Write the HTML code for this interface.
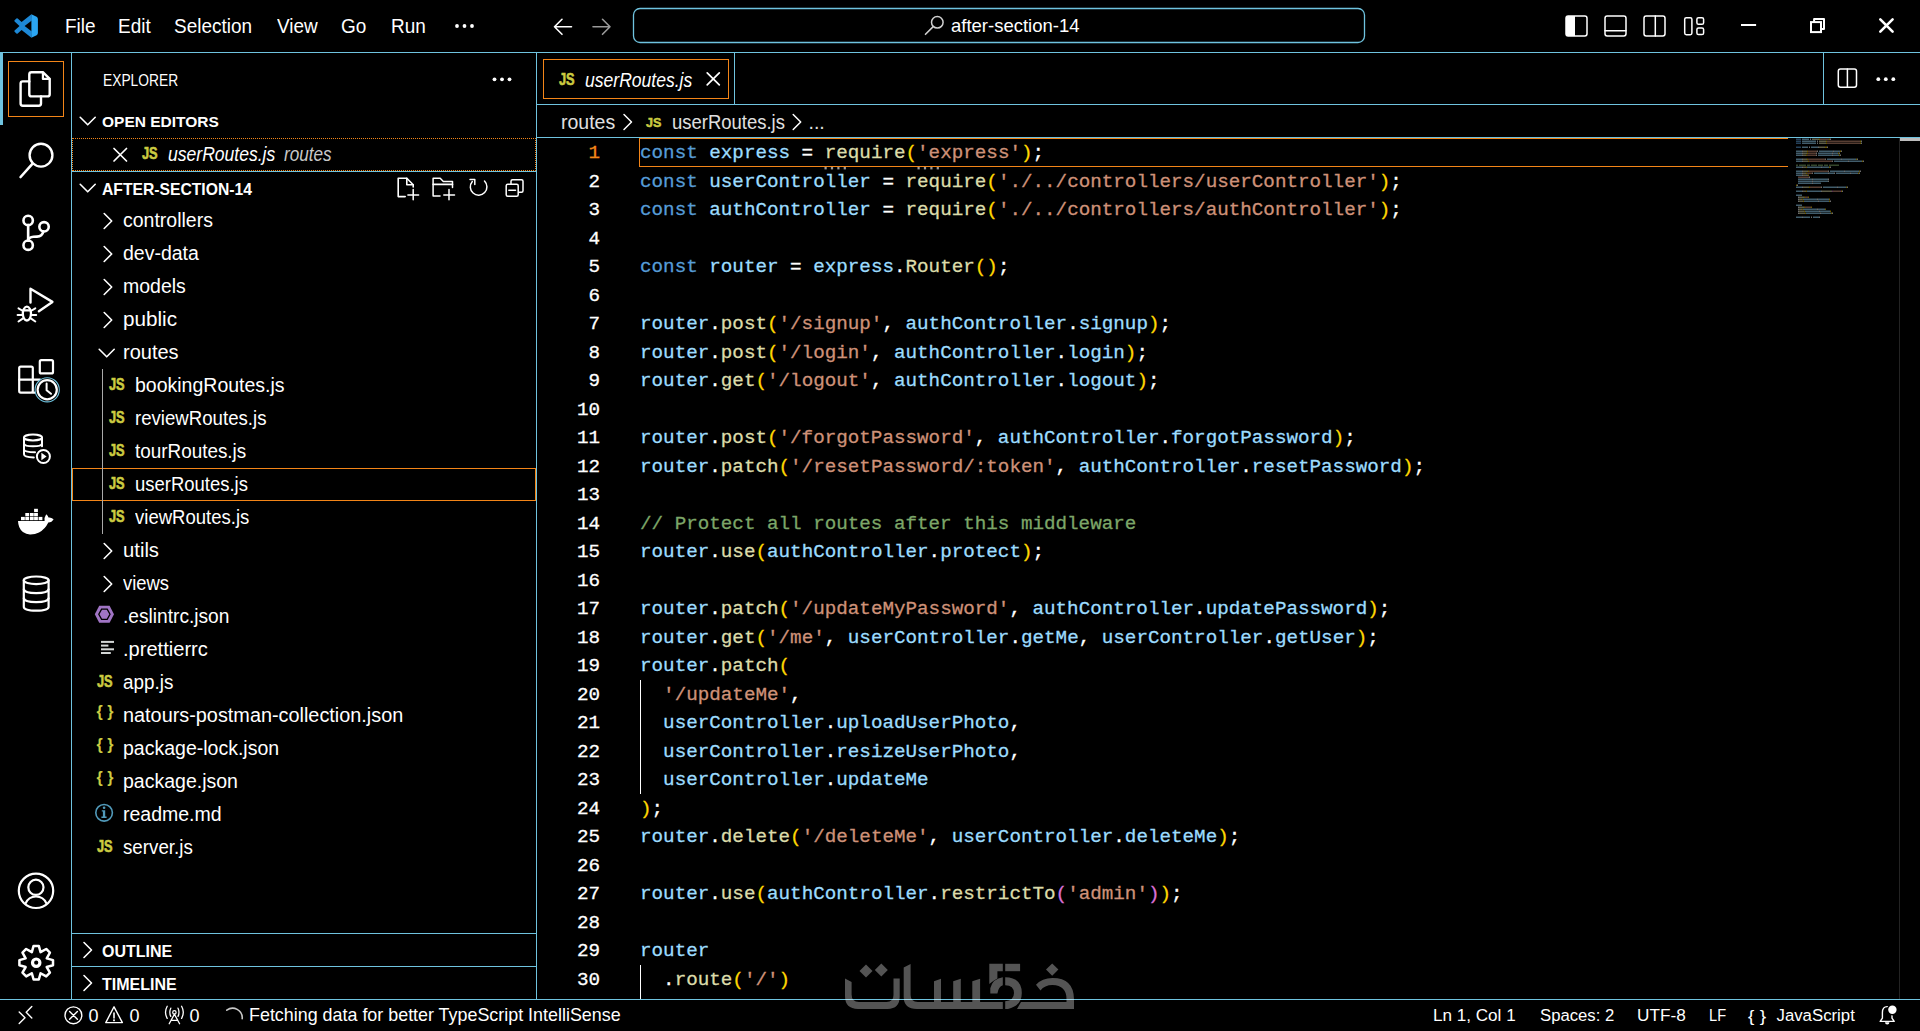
<!DOCTYPE html><html><head><meta charset="utf-8"><title>VS Code</title><style>
*{margin:0;padding:0;box-sizing:border-box}
html,body{width:1920px;height:1031px;background:#000;overflow:hidden}
body{position:relative;font-family:"Liberation Sans",sans-serif;color:#fff}
.a{position:absolute}
.t{position:absolute;white-space:pre}
.code{position:absolute;font-family:"Liberation Mono",monospace;white-space:pre;-webkit-text-stroke-width:0.3px}
svg{position:absolute;left:0;top:0}
</style></head><body>
<div class="a" style="left:0px;top:52px;width:1920px;height:1px;background:#6FC3DF;"></div>
<div class="a" style="left:71px;top:53px;width:1px;height:946px;background:#6FC3DF;"></div>
<div class="a" style="left:536px;top:53px;width:1px;height:946px;background:#6FC3DF;"></div>
<div class="a" style="left:0px;top:999px;width:1920px;height:1px;background:#6FC3DF;"></div>
<div class="a" style="left:537px;top:104px;width:1383px;height:1px;background:#6FC3DF;"></div>
<div class="a" style="left:734px;top:53px;width:1px;height:51px;background:#6FC3DF;"></div>
<div class="a" style="left:1823px;top:53px;width:1px;height:51px;background:#6FC3DF;"></div>
<div class="a" style="left:537px;top:137px;width:1383px;height:1px;background:#6FC3DF;"></div>
<div class="a" style="left:72px;top:171px;width:464px;height:1px;background:#6FC3DF;"></div>
<div class="a" style="left:72px;top:933px;width:464px;height:1px;background:#6FC3DF;"></div>
<div class="a" style="left:72px;top:966px;width:464px;height:1px;background:#6FC3DF;"></div>
<div class="a" style="left:0px;top:53px;width:3px;height:72px;background:#6FC3DF;"></div>
<div class="a" style="left:8px;top:61px;width:56px;height:56px;border:1px solid #F38518"></div>
<div class="t" style="left:64.50px;top:15.61px;font-size:20.3px;line-height:20.3px;color:#fff;font-weight:normal;font-style:normal;transform:scaleX(0.935);transform-origin:0 0;">File</div>
<div class="t" style="left:117.80px;top:15.61px;font-size:20.3px;line-height:20.3px;color:#fff;font-weight:normal;font-style:normal;transform:scaleX(0.935);transform-origin:0 0;">Edit</div>
<div class="t" style="left:174.00px;top:15.61px;font-size:20.3px;line-height:20.3px;color:#fff;font-weight:normal;font-style:normal;transform:scaleX(0.935);transform-origin:0 0;">Selection</div>
<div class="t" style="left:277.00px;top:15.61px;font-size:20.3px;line-height:20.3px;color:#fff;font-weight:normal;font-style:normal;transform:scaleX(0.935);transform-origin:0 0;">View</div>
<div class="t" style="left:341.00px;top:15.61px;font-size:20.3px;line-height:20.3px;color:#fff;font-weight:normal;font-style:normal;transform:scaleX(0.935);transform-origin:0 0;">Go</div>
<div class="t" style="left:390.80px;top:15.61px;font-size:20.3px;line-height:20.3px;color:#fff;font-weight:normal;font-style:normal;transform:scaleX(0.935);transform-origin:0 0;">Run</div>
<div class="t" style="left:951.00px;top:17.14px;font-size:18.5px;line-height:18.5px;color:#fff;font-weight:normal;font-style:normal;">after-section-14</div>
<div class="t" style="left:102.50px;top:72.99px;font-size:15.6px;line-height:15.6px;color:#fff;font-weight:normal;font-style:normal;transform:scaleX(0.885);transform-origin:0 0;">EXPLORER</div>
<div class="t" style="left:102.00px;top:114.48px;font-size:15.5px;line-height:15.5px;color:#fff;font-weight:bold;font-style:normal;">OPEN EDITORS</div>
<div class="a" style="left:72px;top:138px;width:464px;height:33px;border:1px dotted #F38518"></div>
<div class="t" style="left:168.00px;top:144.79px;font-size:19.5px;line-height:19.5px;color:#fff;font-weight:normal;font-style:italic;transform:scaleX(0.9);transform-origin:0 0;">userRoutes.js</div>
<div class="t" style="left:283.50px;top:144.79px;font-size:19.5px;line-height:19.5px;color:#c8c8c8;font-weight:normal;font-style:italic;transform:scaleX(0.88);transform-origin:0 0;">routes</div>
<div class="t" style="left:102.00px;top:182.11px;font-size:15.7px;line-height:15.7px;color:#fff;font-weight:bold;font-style:normal;">AFTER-SECTION-14</div>
<div class="t" style="left:123.00px;top:210.89px;font-size:19.5px;line-height:19.5px;color:#fff;font-weight:normal;font-style:normal;">controllers</div>
<div class="t" style="left:123.00px;top:243.89px;font-size:19.5px;line-height:19.5px;color:#fff;font-weight:normal;font-style:normal;">dev-data</div>
<div class="t" style="left:123.00px;top:276.89px;font-size:19.5px;line-height:19.5px;color:#fff;font-weight:normal;font-style:normal;">models</div>
<div class="t" style="left:123.00px;top:309.89px;font-size:19.5px;line-height:19.5px;color:#fff;font-weight:normal;font-style:normal;transform:scaleX(1.06);transform-origin:0 0;">public</div>
<div class="t" style="left:123.00px;top:342.89px;font-size:19.5px;line-height:19.5px;color:#fff;font-weight:normal;font-style:normal;transform:scaleX(1.025);transform-origin:0 0;">routes</div>
<div class="t" style="left:135.00px;top:375.89px;font-size:19.5px;line-height:19.5px;color:#fff;font-weight:normal;font-style:normal;">bookingRoutes.js</div>
<div class="t" style="left:135.00px;top:408.89px;font-size:19.5px;line-height:19.5px;color:#fff;font-weight:normal;font-style:normal;transform:scaleX(0.955);transform-origin:0 0;">reviewRoutes.js</div>
<div class="t" style="left:135.00px;top:441.89px;font-size:19.5px;line-height:19.5px;color:#fff;font-weight:normal;font-style:normal;transform:scaleX(0.968);transform-origin:0 0;">tourRoutes.js</div>
<div class="t" style="left:135.00px;top:474.89px;font-size:19.5px;line-height:19.5px;color:#fff;font-weight:normal;font-style:normal;transform:scaleX(0.947);transform-origin:0 0;">userRoutes.js</div>
<div class="t" style="left:135.00px;top:507.89px;font-size:19.5px;line-height:19.5px;color:#fff;font-weight:normal;font-style:normal;transform:scaleX(0.95);transform-origin:0 0;">viewRoutes.js</div>
<div class="t" style="left:123.00px;top:540.89px;font-size:19.5px;line-height:19.5px;color:#fff;font-weight:normal;font-style:normal;transform:scaleX(1.038);transform-origin:0 0;">utils</div>
<div class="t" style="left:123.00px;top:573.89px;font-size:19.5px;line-height:19.5px;color:#fff;font-weight:normal;font-style:normal;transform:scaleX(0.943);transform-origin:0 0;">views</div>
<div class="t" style="left:123.00px;top:606.89px;font-size:19.5px;line-height:19.5px;color:#fff;font-weight:normal;font-style:normal;transform:scaleX(0.982);transform-origin:0 0;">.eslintrc.json</div>
<div class="t" style="left:123.00px;top:639.89px;font-size:19.5px;line-height:19.5px;color:#fff;font-weight:normal;font-style:normal;transform:scaleX(1.03);transform-origin:0 0;">.prettierrc</div>
<div class="t" style="left:123.00px;top:672.89px;font-size:19.5px;line-height:19.5px;color:#fff;font-weight:normal;font-style:normal;transform:scaleX(0.967);transform-origin:0 0;">app.js</div>
<div class="t" style="left:123.00px;top:705.89px;font-size:19.5px;line-height:19.5px;color:#fff;font-weight:normal;font-style:normal;transform:scaleX(1.018);transform-origin:0 0;">natours-postman-collection.json</div>
<div class="t" style="left:123.00px;top:738.89px;font-size:19.5px;line-height:19.5px;color:#fff;font-weight:normal;font-style:normal;">package-lock.json</div>
<div class="t" style="left:123.00px;top:771.89px;font-size:19.5px;line-height:19.5px;color:#fff;font-weight:normal;font-style:normal;">package.json</div>
<div class="t" style="left:123.00px;top:804.89px;font-size:19.5px;line-height:19.5px;color:#fff;font-weight:normal;font-style:normal;">readme.md</div>
<div class="t" style="left:123.00px;top:837.89px;font-size:19.5px;line-height:19.5px;color:#fff;font-weight:normal;font-style:normal;transform:scaleX(0.961);transform-origin:0 0;">server.js</div>
<div class="a" style="left:72px;top:468px;width:464px;height:33px;border:1px solid #F38518"></div>
<div class="a" style="left:102px;top:369px;width:1px;height:165px;background:#a9a9a9;"></div>
<div class="t" style="left:102.00px;top:944.45px;font-size:16px;line-height:16px;color:#fff;font-weight:bold;font-style:normal;">OUTLINE</div>
<div class="t" style="left:102.00px;top:977.45px;font-size:16px;line-height:16px;color:#fff;font-weight:bold;font-style:normal;">TIMELINE</div>
<div class="a" style="left:543px;top:59px;width:186px;height:40px;border:1px solid #F38518"></div>
<div class="t" style="left:585.00px;top:71.49px;font-size:19.5px;line-height:19.5px;color:#fff;font-weight:normal;font-style:italic;transform:scaleX(0.9);transform-origin:0 0;">userRoutes.js</div>
<div class="t" style="left:561.00px;top:113.49px;font-size:19.5px;line-height:19.5px;color:#e0e0e0;font-weight:normal;font-style:normal;">routes</div>
<div class="t" style="left:672.00px;top:113.49px;font-size:19.5px;line-height:19.5px;color:#e0e0e0;font-weight:normal;font-style:normal;transform:scaleX(0.947);transform-origin:0 0;">userRoutes.js</div>
<div class="t" style="left:808.50px;top:113.49px;font-size:19.5px;line-height:19.5px;color:#e0e0e0;font-weight:normal;font-style:normal;">...</div>
<div class="t" style="left:88.50px;top:1006.56px;font-size:18px;line-height:18px;color:#fff;font-weight:normal;font-style:normal;">0</div>
<div class="t" style="left:129.50px;top:1006.56px;font-size:18px;line-height:18px;color:#fff;font-weight:normal;font-style:normal;">0</div>
<div class="t" style="left:189.50px;top:1006.56px;font-size:18px;line-height:18px;color:#fff;font-weight:normal;font-style:normal;">0</div>
<div class="t" style="left:249.00px;top:1006.64px;font-size:17.9px;line-height:17.9px;color:#fff;font-weight:normal;font-style:normal;">Fetching data for better TypeScript IntelliSense</div>
<div class="t" style="left:1433.00px;top:1007.32px;font-size:17.1px;line-height:17.1px;color:#fff;font-weight:normal;font-style:normal;">Ln 1, Col 1</div>
<div class="t" style="left:1540.00px;top:1007.66px;font-size:16.7px;line-height:16.7px;color:#fff;font-weight:normal;font-style:normal;">Spaces: 2</div>
<div class="t" style="left:1637.00px;top:1007.24px;font-size:17.2px;line-height:17.2px;color:#fff;font-weight:normal;font-style:normal;">UTF-8</div>
<div class="t" style="left:1708.50px;top:1007.24px;font-size:17.2px;line-height:17.2px;color:#fff;font-weight:normal;font-style:normal;transform:scaleX(0.85);transform-origin:0 0;">LF</div>
<div class="t" style="left:1776.50px;top:1007.58px;font-size:16.8px;line-height:16.8px;color:#fff;font-weight:normal;font-style:normal;">JavaScript</div>
<svg width="1920" height="1031" viewBox="0 0 1920 1031" style="position:absolute;left:0;top:0"><path fill="#1D88D6" d="M14.6 20.3Q14 20.9 14.6 21.5L19.5 26L14.6 30.5Q14 31.1 14.6 31.7L16.4 33.4Q17 33.9 17.7 33.4L21.6 30L31.4 37.7L31.8 31.6L24.6 26L31.8 20.4L31.4 14.3L21.6 22L17.7 18.6Q17 18.1 16.4 18.6Z"/>
<path fill="#2BA6F3" d="M31.4 14.3L36.6 16.8Q37.9 17.5 37.9 19V33Q37.9 34.5 36.6 35.2L31.4 37.7Z"/>
<circle cx="457" cy="26" r="1.9" fill="#fff"/>
<circle cx="464.5" cy="26" r="1.9" fill="#fff"/>
<circle cx="472" cy="26" r="1.9" fill="#fff"/>
<path d="M571.5 26.8H554.5M562 19.3L554.5 26.8L562 34.3" fill="none" stroke="#fff" stroke-width="1.6" stroke-linecap="round" stroke-linejoin="round" />
<path d="M593 26.8H610M602.5 19.3L610 26.8L602.5 34.3" fill="none" stroke="#9a9a9a" stroke-width="1.6" stroke-linecap="round" stroke-linejoin="round" />
<rect x="633.5" y="8.5" width="731" height="34" rx="6.5" fill="none" stroke="#6FC3DF" stroke-width="1.3"/>
<circle cx="937.3" cy="22.3" r="5.8" fill="none" stroke="#d0d0d0" stroke-width="1.5"/>
<path d="M933.2 26.6L925.5 34.3" fill="none" stroke="#d0d0d0" stroke-width="1.6" stroke-linecap="round" stroke-linejoin="round" />
<rect x="1566" y="16" width="21" height="20" rx="2.2" fill="none" stroke="#fff" stroke-width="1.5"/>
<path d="M1568.2 16 h6.8 v20 h-6.8 q-2.2 0 -2.2 -2.2 v-15.6 q0 -2.2 2.2 -2.2z" fill="#fff"/>
<rect x="1605" y="16" width="21" height="20" rx="2.2" fill="none" stroke="#fff" stroke-width="1.5"/>
<path d="M1605 30.7H1626" fill="none" stroke="#fff" stroke-width="1.5" stroke-linecap="round" stroke-linejoin="round" stroke-linecap="butt"/>
<rect x="1644" y="16" width="21" height="20" rx="2.2" fill="none" stroke="#fff" stroke-width="1.5"/>
<path d="M1655.3 16V36" fill="none" stroke="#fff" stroke-width="1.5" stroke-linecap="round" stroke-linejoin="round" />
<rect x="1684.7" y="17.7" width="7.2" height="17" rx="1.6" fill="none" stroke="#fff" stroke-width="1.5"/>
<rect x="1696.9" y="17.7" width="6.7" height="6.6" rx="1.6" fill="none" stroke="#fff" stroke-width="1.5"/>
<rect x="1696.9" y="28" width="6.7" height="6.6" rx="1.6" fill="none" stroke="#fff" stroke-width="1.5"/>
<rect x="1741" y="24" width="15.1" height="2" fill="#fff"/>
<rect x="1811" y="22.1" width="10" height="10" fill="none" stroke="#fff" stroke-width="2"/>
<path d="M1814.1 22.1V19H1824V29H1821" fill="none" stroke="#fff" stroke-width="2.0" stroke-linecap="round" stroke-linejoin="round" stroke-linecap="butt" stroke-linejoin="miter"/>
<path d="M1880.3 19.4L1892.6 31.7M1892.6 19.4L1880.3 31.7" fill="none" stroke="#fff" stroke-width="2.6" stroke-linecap="round" stroke-linejoin="round" stroke-linecap="square"/>
<path d="M31.5 72.3H43.1L49.7 78.9V94.2Q49.7 96.4 47.5 96.4H31.5Q29.3 96.4 29.3 94.2V74.5Q29.3 72.3 31.5 72.3Z" fill="none" stroke="#fff" stroke-width="2.4" stroke-linecap="round" stroke-linejoin="round" />
<path d="M42.9 72.5V78.9H49.5" fill="none" stroke="#fff" stroke-width="2.2" stroke-linecap="round" stroke-linejoin="round" stroke-linejoin="miter"/>
<path d="M29.3 81.4H22.8Q20.6 81.4 20.6 83.6V103.5Q20.6 105.7 22.8 105.7H38.8Q41 105.7 41 103.5V96.4" fill="none" stroke="#fff" stroke-width="2.4" stroke-linecap="round" stroke-linejoin="round" />
<circle cx="41" cy="155.2" r="11.4" fill="none" stroke="#fff" stroke-width="2.4"/>
<path d="M32.6 163.6L20.6 177" fill="none" stroke="#fff" stroke-width="2.6" stroke-linecap="round" stroke-linejoin="round" />
<circle cx="28.15" cy="220.4" r="4.7" fill="none" stroke="#fff" stroke-width="2.6"/>
<circle cx="28.15" cy="245.2" r="4.7" fill="none" stroke="#fff" stroke-width="2.6"/>
<circle cx="44.05" cy="226.8" r="4.7" fill="none" stroke="#fff" stroke-width="2.6"/>
<path d="M28.15 225.1V240.5" fill="none" stroke="#fff" stroke-width="2.6" stroke-linecap="round" stroke-linejoin="round" />
<path d="M43.3 231.4Q42.3 236.4 37 236.6L33.5 236.8Q29 237.2 28.15 240.3" fill="none" stroke="#fff" stroke-width="2.6" stroke-linecap="round" stroke-linejoin="round" />
<path d="M30.5 302.6V288.8L52.4 301.9L38.9 311.2" fill="none" stroke="#fff" stroke-width="2.4" stroke-linecap="round" stroke-linejoin="round" />
<ellipse cx="26.9" cy="313.6" rx="4.1" ry="6.9" fill="none" stroke="#fff" stroke-width="2.3"/>
<path d="M23.2 310.4H30.6" fill="none" stroke="#fff" stroke-width="2.1" stroke-linecap="round" stroke-linejoin="round" stroke-linecap="butt"/>
<path d="M18.5 308.3L23 311M35.3 308.3L30.8 311M17.6 314.9H22.8M36.2 314.9H31M18.5 321.5L23 318.4M35.3 321.5L30.8 318.4" fill="none" stroke="#fff" stroke-width="2.0" stroke-linecap="round" stroke-linejoin="round" />
<rect x="19.2" y="366.6" width="13.6" height="26" rx="1.5" fill="none" stroke="#fff" stroke-width="2.2"/>
<path d="M19.2 379.6H40" fill="none" stroke="#fff" stroke-width="2.2" stroke-linecap="round" stroke-linejoin="round" />
<path d="M32.8 392.6H40" fill="none" stroke="#fff" stroke-width="2.2" stroke-linecap="round" stroke-linejoin="round" />
<rect x="39.8" y="360.2" width="13.2" height="13.2" rx="1.5" fill="none" stroke="#fff" stroke-width="2.2"/>
<circle cx="47.2" cy="389.8" r="12.1" fill="#000" stroke="#6FC3DF" stroke-width="1.1"/>
<circle cx="47.2" cy="389.8" r="9.6" fill="#000" stroke="#fff" stroke-width="2.2"/>
<path d="M46.6 383.6V390.3L51 393.8" fill="none" stroke="#fff" stroke-width="2.0" stroke-linecap="round" stroke-linejoin="round" />
<ellipse cx="33" cy="437.5" rx="9" ry="2.9" fill="none" stroke="#fff" stroke-width="2.0"/>
<path d="M24 437.5V454.2Q24 457.2 33.8 457.4M42 437.5V446.3" fill="none" stroke="#fff" stroke-width="2.0" stroke-linecap="round" stroke-linejoin="round" stroke-linecap="butt"/>
<path d="M24 443.6Q24.5 446.3 33 446.3Q41.5 446.3 42 443.6" fill="none" stroke="#fff" stroke-width="2.0" stroke-linecap="round" stroke-linejoin="round" />
<path d="M24 449.6Q24.5 452.2 35 452.2" fill="none" stroke="#fff" stroke-width="2.0" stroke-linecap="round" stroke-linejoin="round" stroke-linecap="butt"/>
<circle cx="43.4" cy="456.5" r="6.5" fill="#000" stroke="#fff" stroke-width="2.0"/>
<path d="M41.4 452.8V460.2L46.6 456.5Z" fill="#fff" />
<path d="M18 521H44.6Q44 517.5 46.2 514.2Q48 515.5 48.5 517.6Q51 517.2 53.6 519.2Q52 522.3 48.3 522.6Q45 529.5 39 532.5Q35 534.6 30 534.5Q22 534 19.2 527Q18.2 524.5 18 521Z" fill="#fff" />
<rect x="34.1" y="508.8" width="3.8" height="3.3" fill="#fff"/>
<rect x="25.3" y="513.0" width="3.8" height="3.3" fill="#fff"/>
<rect x="29.9" y="513.0" width="3.8" height="3.3" fill="#fff"/>
<rect x="34.1" y="513.0" width="3.8" height="3.3" fill="#fff"/>
<rect x="21.0" y="516.9" width="3.8" height="3.3" fill="#fff"/>
<rect x="25.3" y="516.9" width="3.8" height="3.3" fill="#fff"/>
<rect x="29.9" y="516.9" width="3.8" height="3.3" fill="#fff"/>
<rect x="34.1" y="516.9" width="3.8" height="3.3" fill="#fff"/>
<rect x="38.6" y="516.9" width="3.8" height="3.3" fill="#fff"/>
<ellipse cx="36.2" cy="580.3" rx="12.4" ry="3.8" fill="none" stroke="#fff" stroke-width="2.2"/>
<path d="M23.8 580.3V606.7Q23.8 610.6 36.2 610.6Q48.6 610.6 48.6 606.7V580.3" fill="none" stroke="#fff" stroke-width="2.2" stroke-linecap="round" stroke-linejoin="round" />
<path d="M23.8 589.3Q24.5 593.1 36.2 593.1Q47.9 593.1 48.6 589.3" fill="none" stroke="#fff" stroke-width="2.2" stroke-linecap="round" stroke-linejoin="round" />
<path d="M23.8 598.3Q24.5 602.1 36.2 602.1Q47.9 602.1 48.6 598.3" fill="none" stroke="#fff" stroke-width="2.2" stroke-linecap="round" stroke-linejoin="round" />
<circle cx="36" cy="890.8" r="17.2" fill="none" stroke="#fff" stroke-width="2.2"/>
<circle cx="35.9" cy="887.3" r="7.6" fill="none" stroke="#fff" stroke-width="2.2"/>
<path d="M25.6 903.4Q28.5 896.5 36 896.5Q43.5 896.5 46.4 903.4" fill="none" stroke="#fff" stroke-width="2.2" stroke-linecap="round" stroke-linejoin="round" />
<path d="M31.84 952.17 L33.58 945.90 L38.82 945.90 L40.56 952.17 L46.22 948.97 L49.93 952.68 L46.73 958.34 L53.00 960.08 L53.00 965.32 L46.73 967.06 L49.93 972.72 L46.22 976.43 L40.56 973.23 L38.82 979.50 L33.58 979.50 L31.84 973.23 L26.18 976.43 L22.47 972.72 L25.67 967.06 L19.40 965.32 L19.40 960.08 L25.67 958.34 L22.47 952.68 L26.18 948.97Z" fill="none" stroke="#fff" stroke-width="2.5" stroke-linecap="round" stroke-linejoin="round" stroke-linejoin="miter"/>
<circle cx="36.2" cy="962.7" r="3.7" fill="none" stroke="#fff" stroke-width="3.2"/>
<circle cx="494.5" cy="79.3" r="1.9" fill="#fff"/>
<circle cx="502" cy="79.3" r="1.9" fill="#fff"/>
<circle cx="509.5" cy="79.3" r="1.9" fill="#fff"/>
<path d="M80.2 117.3L87.7 124.8L95.2 117.3" fill="none" stroke="#fff" stroke-width="1.6" stroke-linecap="round" stroke-linejoin="round" stroke-linecap="butt"/>
<path d="M80.2 184.3L87.7 191.8L95.2 184.3" fill="none" stroke="#fff" stroke-width="1.6" stroke-linecap="round" stroke-linejoin="round" stroke-linecap="butt"/>
<path d="M84 942.5L91.5 950.0L84 957.5" fill="none" stroke="#fff" stroke-width="1.6" stroke-linecap="round" stroke-linejoin="round" stroke-linecap="butt"/>
<path d="M84 975.5L91.5 983.0L84 990.5" fill="none" stroke="#fff" stroke-width="1.6" stroke-linecap="round" stroke-linejoin="round" stroke-linecap="butt"/>
<path d="M114 148.5L126.5 161M126.5 148.5L114 161" fill="none" stroke="#fff" stroke-width="1.7" stroke-linecap="round" stroke-linejoin="round" stroke-linecap="butt"/>
<path d="M405.2 196.6H398.2V178.3H406.8L413.2 184.7V187" fill="none" stroke="#fff" stroke-width="1.6" stroke-linecap="round" stroke-linejoin="round" stroke-linecap="butt" stroke-linejoin="miter"/>
<path d="M406.8 178.3V184.7H413.2" fill="none" stroke="#fff" stroke-width="1.6" stroke-linecap="round" stroke-linejoin="round" stroke-linecap="butt" stroke-linejoin="miter"/>
<path d="M413.2 189.5V199.8M407.9 195H418.6" fill="none" stroke="#fff" stroke-width="1.5" stroke-linecap="round" stroke-linejoin="round" stroke-linecap="butt"/>
<path d="M440 196.1H433.1V178.3H440.2L443.3 181.5H452.5V187.5" fill="none" stroke="#fff" stroke-width="1.5" stroke-linecap="round" stroke-linejoin="round" stroke-linecap="butt" stroke-linejoin="miter"/>
<path d="M433.1 184.4H452.5" fill="none" stroke="#fff" stroke-width="1.6" stroke-linecap="round" stroke-linejoin="round" stroke-linecap="butt" stroke-linejoin="miter"/>
<path d="M449 189.5V199.8M443.8 195H454.5" fill="none" stroke="#fff" stroke-width="1.5" stroke-linecap="round" stroke-linejoin="round" stroke-linecap="butt"/>
<path d="M484.5 181A8.3 8.3 0 1 1 472.3 181.5" fill="none" stroke="#fff" stroke-width="1.5" stroke-linecap="round" stroke-linejoin="round" stroke-linecap="butt"/>
<path d="M470 179.6H474.8V184.6" fill="none" stroke="#fff" stroke-width="1.5" stroke-linecap="round" stroke-linejoin="round" stroke-linecap="butt" stroke-linejoin="miter"/>
<rect x="511" y="179.8" width="12" height="12.4" rx="1.5" fill="none" stroke="#fff" stroke-width="1.5"/>
<rect x="506.2" y="184.3" width="12" height="12" rx="1.5" fill="#000" stroke="#fff" stroke-width="1.5"/>
<path d="M508.8 190.2H515.5" fill="none" stroke="#fff" stroke-width="1.5" stroke-linecap="round" stroke-linejoin="round" stroke-linecap="butt"/>
<path d="M707.2 72.8L719.3 84.9M719.3 72.8L707.2 84.9" fill="none" stroke="#fff" stroke-width="1.7" stroke-linecap="round" stroke-linejoin="round" stroke-linecap="butt"/>
<path d="M624 114.5L631.5 122L624 129.5" fill="none" stroke="#fff" stroke-width="1.5" stroke-linecap="round" stroke-linejoin="round" stroke-linecap="butt"/>
<path d="M793.2 114.5L800.7 122L793.2 129.5" fill="none" stroke="#fff" stroke-width="1.5" stroke-linecap="round" stroke-linejoin="round" stroke-linecap="butt"/>
<rect x="1838.3" y="69" width="18.2" height="18.2" rx="2.2" fill="none" stroke="#fff" stroke-width="1.5"/>
<path d="M1847.4 69V87.2" fill="none" stroke="#fff" stroke-width="1.5" stroke-linecap="round" stroke-linejoin="round" />
<circle cx="1878.3" cy="79.2" r="1.9" fill="#fff"/>
<circle cx="1885.8" cy="79.2" r="1.9" fill="#fff"/>
<circle cx="1893.3" cy="79.2" r="1.9" fill="#fff"/>
<rect x="824.5" y="167" width="2.2" height="2.4" fill="#9a9a9a"/>
<rect x="830.9" y="167" width="2.2" height="2.4" fill="#9a9a9a"/>
<rect x="837.3" y="167" width="2.2" height="2.4" fill="#9a9a9a"/>
<rect x="843.7" y="167" width="2.2" height="2.4" fill="#9a9a9a"/>
<rect x="917.5" y="167" width="2.2" height="2.4" fill="#9a9a9a"/>
<rect x="923.9" y="167" width="2.2" height="2.4" fill="#9a9a9a"/>
<rect x="930.3" y="167" width="2.2" height="2.4" fill="#9a9a9a"/>
<rect x="936.7" y="167" width="2.2" height="2.4" fill="#9a9a9a"/>
<path d="M19.2 1012L25 1017.7L19.2 1023.4M31.8 1006.4L26.2 1012.2L31.8 1018" fill="none" stroke="#fff" stroke-width="1.4" stroke-linecap="round" stroke-linejoin="round" stroke-linecap="butt"/>
<circle cx="73.4" cy="1015.3" r="8.4" fill="none" stroke="#fff" stroke-width="1.4"/>
<path d="M69.6 1011.5L77.4 1019.3M77.4 1011.5L69.6 1019.3" fill="none" stroke="#fff" stroke-width="1.4" stroke-linecap="round" stroke-linejoin="round" stroke-linecap="butt"/>
<path d="M114 1006.8L105.8 1022.6H122.4Z" fill="none" stroke="#fff" stroke-width="1.4" stroke-linecap="round" stroke-linejoin="round" stroke-linejoin="miter"/>
<path d="M114 1013V1018" fill="none" stroke="#fff" stroke-width="1.6" stroke-linecap="round" stroke-linejoin="round" stroke-linecap="butt"/>
<rect x="113.1" y="1019.4" width="1.8" height="1.8" fill="#fff"/>
<circle cx="174.4" cy="1012.4" r="1.7" fill="none" stroke="#fff" stroke-width="1.2"/>
<path d="M170.8 1008.2Q168.8 1012.2 170.8 1016.4M178 1008.2Q180 1012.2 178 1016.4" fill="none" stroke="#fff" stroke-width="1.3" stroke-linecap="round" stroke-linejoin="round" />
<path d="M167.2 1006.2Q163.8 1012.2 167.2 1018.4M181.6 1006.2Q185 1012.2 181.6 1018.4" fill="none" stroke="#fff" stroke-width="1.3" stroke-linecap="round" stroke-linejoin="round" />
<path d="M174.4 1014.2L169.2 1023.8M174.4 1014.2L179.6 1023.8M171 1020.4H177.8" fill="none" stroke="#fff" stroke-width="1.3" stroke-linecap="round" stroke-linejoin="round" stroke-linecap="butt"/>
<path d="M226.8 1010.2A9.6 9.6 0 0 1 242.2 1018.6" fill="none" stroke="#c8c8c8" stroke-width="1.6" stroke-linecap="round" stroke-linejoin="round" stroke-linecap="round"/>
<text x="1748" y="1021.5" font-family="Liberation Sans" font-size="17" fill="#fff" textLength="18" lengthAdjust="spacingAndGlyphs">{ }</text>
<path d="M1880.2 1021.4H1894.2L1892 1018.2V1012.6Q1892 1006.6 1887.2 1006.6Q1882.4 1006.6 1882.4 1012.6V1018.2Z" fill="none" stroke="#fff" stroke-width="1.4" stroke-linecap="round" stroke-linejoin="round" stroke-linejoin="round"/>
<path d="M1885 1022.2Q1885 1024.6 1887.2 1024.6Q1889.4 1024.6 1889.4 1022.2Z" fill="#fff" />
<circle cx="1892.4" cy="1009.8" r="5.6" fill="#000"/>
<circle cx="1892.4" cy="1009.8" r="4.2" fill="#fff"/>
<path d="M99.2 605.8H109.6L114 614.3L109.6 622.8H99.2L94.8 614.3Z" fill="#A074C4"/>
<path d="M101.6 609.2H107.2L110 614.3L107.2 619.4H101.6L98.8 614.3Z" fill="#A074C4" stroke="#000" stroke-width="1.3"/>
<rect x="101" y="640.9" width="13.0" height="2" fill="#d4d7d6"/>
<rect x="101" y="644.6" width="7.4" height="2" fill="#d4d7d6"/>
<rect x="101" y="648.3" width="13.0" height="2" fill="#d4d7d6"/>
<rect x="101" y="652.0" width="9.8" height="2" fill="#d4d7d6"/>
<circle cx="104.1" cy="812.8" r="8.3" fill="none" stroke="#519ABA" stroke-width="1.6"/>
<circle cx="104.1" cy="807.8" r="1.3" fill="#519ABA"/>
<path d="M101.8 810.3H105.2V816.6H106.6V818H101.4V816.6H102.9V811.6H101.8Z" fill="#519ABA"/>
<path d="M104.2 213.5L111.7 221.0L104.2 228.5" fill="none" stroke="#fff" stroke-width="1.6" stroke-linecap="round" stroke-linejoin="round" stroke-linecap="butt"/>
<path d="M104.2 246.5L111.7 254.0L104.2 261.5" fill="none" stroke="#fff" stroke-width="1.6" stroke-linecap="round" stroke-linejoin="round" stroke-linecap="butt"/>
<path d="M104.2 279.5L111.7 287.0L104.2 294.5" fill="none" stroke="#fff" stroke-width="1.6" stroke-linecap="round" stroke-linejoin="round" stroke-linecap="butt"/>
<path d="M104.2 312.5L111.7 320.0L104.2 327.5" fill="none" stroke="#fff" stroke-width="1.6" stroke-linecap="round" stroke-linejoin="round" stroke-linecap="butt"/>
<path d="M99.2 349.3L106.7 356.8L114.2 349.3" fill="none" stroke="#fff" stroke-width="1.6" stroke-linecap="round" stroke-linejoin="round" stroke-linecap="butt"/>
<path d="M104.2 543.5L111.7 551.0L104.2 558.5" fill="none" stroke="#fff" stroke-width="1.6" stroke-linecap="round" stroke-linejoin="round" stroke-linecap="butt"/>
<path d="M104.2 576.5L111.7 584.0L104.2 591.5" fill="none" stroke="#fff" stroke-width="1.6" stroke-linecap="round" stroke-linejoin="round" stroke-linecap="butt"/></svg>
<div class="t" style="left:109.0px;top:377.2px;font-size:16px;line-height:16px;font-weight:bold;color:#CBCB41;-webkit-text-stroke:0.6px #CBCB41;transform:scaleX(0.8);transform-origin:0 0">JS</div>
<div class="t" style="left:109.0px;top:410.2px;font-size:16px;line-height:16px;font-weight:bold;color:#CBCB41;-webkit-text-stroke:0.6px #CBCB41;transform:scaleX(0.8);transform-origin:0 0">JS</div>
<div class="t" style="left:109.0px;top:443.2px;font-size:16px;line-height:16px;font-weight:bold;color:#CBCB41;-webkit-text-stroke:0.6px #CBCB41;transform:scaleX(0.8);transform-origin:0 0">JS</div>
<div class="t" style="left:109.0px;top:476.2px;font-size:16px;line-height:16px;font-weight:bold;color:#CBCB41;-webkit-text-stroke:0.6px #CBCB41;transform:scaleX(0.8);transform-origin:0 0">JS</div>
<div class="t" style="left:109.0px;top:509.2px;font-size:16px;line-height:16px;font-weight:bold;color:#CBCB41;-webkit-text-stroke:0.6px #CBCB41;transform:scaleX(0.8);transform-origin:0 0">JS</div>
<div class="t" style="left:97.0px;top:674.2px;font-size:16px;line-height:16px;font-weight:bold;color:#CBCB41;-webkit-text-stroke:0.6px #CBCB41;transform:scaleX(0.8);transform-origin:0 0">JS</div>
<div class="t" style="left:96.5px;top:704.0px;font-size:16px;line-height:16px;font-weight:bold;color:#CBCB41;letter-spacing:0px">{ }</div>
<div class="t" style="left:96.5px;top:737.0px;font-size:16px;line-height:16px;font-weight:bold;color:#CBCB41;letter-spacing:0px">{ }</div>
<div class="t" style="left:96.5px;top:770.0px;font-size:16px;line-height:16px;font-weight:bold;color:#CBCB41;letter-spacing:0px">{ }</div>
<div class="t" style="left:97.0px;top:839.2px;font-size:16px;line-height:16px;font-weight:bold;color:#CBCB41;-webkit-text-stroke:0.6px #CBCB41;transform:scaleX(0.8);transform-origin:0 0">JS</div>
<div class="t" style="left:142.0px;top:145.9px;font-size:16px;line-height:16px;font-weight:bold;color:#CBCB41;-webkit-text-stroke:0.6px #CBCB41;transform:scaleX(0.8);transform-origin:0 0">JS</div>
<div class="t" style="left:559.0px;top:72.4px;font-size:16px;line-height:16px;font-weight:bold;color:#CBCB41;-webkit-text-stroke:0.6px #CBCB41;transform:scaleX(0.8);transform-origin:0 0">JS</div>
<div class="t" style="left:646px;top:117.4px;font-size:12.5px;line-height:12.5px;font-weight:bold;color:#CBCB41;-webkit-text-stroke:0.5px #CBCB41">JS</div>
<div class="a" style="left:537px;top:138px;width:1383px;height:861px;overflow:hidden">
<div class="a" style="left:102px;top:0px;width:1160px;height:29px;border:1px solid #F38518;border-right:none"></div>
<div class="code" style="left:0;width:63px;text-align:right;top:1.48px;font-size:19.24px;line-height:28.5px;color:#F38518">1</div>
<div class="code" style="left:103px;top:1.48px;font-size:19.24px;line-height:28.5px"><span style="color:#569CD6">const</span><span style="color:#FFFFFF"> </span><span style="color:#9CDCFE">express</span><span style="color:#FFFFFF"> = </span><span style="color:#DCDCAA">require</span><span style="color:#FFD700">(</span><span style="color:#CE9178">&#x27;express&#x27;</span><span style="color:#FFD700">)</span><span style="color:#FFFFFF">;</span></div>
<div class="code" style="left:0;width:63px;text-align:right;top:29.98px;font-size:19.24px;line-height:28.5px;color:#FFFFFF">2</div>
<div class="code" style="left:103px;top:29.98px;font-size:19.24px;line-height:28.5px"><span style="color:#569CD6">const</span><span style="color:#FFFFFF"> </span><span style="color:#9CDCFE">userController</span><span style="color:#FFFFFF"> = </span><span style="color:#DCDCAA">require</span><span style="color:#FFD700">(</span><span style="color:#CE9178">&#x27;./../controllers/userController&#x27;</span><span style="color:#FFD700">)</span><span style="color:#FFFFFF">;</span></div>
<div class="code" style="left:0;width:63px;text-align:right;top:58.48px;font-size:19.24px;line-height:28.5px;color:#FFFFFF">3</div>
<div class="code" style="left:103px;top:58.48px;font-size:19.24px;line-height:28.5px"><span style="color:#569CD6">const</span><span style="color:#FFFFFF"> </span><span style="color:#9CDCFE">authController</span><span style="color:#FFFFFF"> = </span><span style="color:#DCDCAA">require</span><span style="color:#FFD700">(</span><span style="color:#CE9178">&#x27;./../controllers/authController&#x27;</span><span style="color:#FFD700">)</span><span style="color:#FFFFFF">;</span></div>
<div class="code" style="left:0;width:63px;text-align:right;top:86.98px;font-size:19.24px;line-height:28.5px;color:#FFFFFF">4</div>
<div class="code" style="left:0;width:63px;text-align:right;top:115.48px;font-size:19.24px;line-height:28.5px;color:#FFFFFF">5</div>
<div class="code" style="left:103px;top:115.48px;font-size:19.24px;line-height:28.5px"><span style="color:#569CD6">const</span><span style="color:#FFFFFF"> </span><span style="color:#9CDCFE">router</span><span style="color:#FFFFFF"> = </span><span style="color:#9CDCFE">express</span><span style="color:#FFFFFF">.</span><span style="color:#DCDCAA">Router</span><span style="color:#FFD700">()</span><span style="color:#FFFFFF">;</span></div>
<div class="code" style="left:0;width:63px;text-align:right;top:143.98px;font-size:19.24px;line-height:28.5px;color:#FFFFFF">6</div>
<div class="code" style="left:0;width:63px;text-align:right;top:172.48px;font-size:19.24px;line-height:28.5px;color:#FFFFFF">7</div>
<div class="code" style="left:103px;top:172.48px;font-size:19.24px;line-height:28.5px"><span style="color:#9CDCFE">router</span><span style="color:#FFFFFF">.</span><span style="color:#DCDCAA">post</span><span style="color:#FFD700">(</span><span style="color:#CE9178">&#x27;/signup&#x27;</span><span style="color:#FFFFFF">, </span><span style="color:#9CDCFE">authController</span><span style="color:#FFFFFF">.</span><span style="color:#9CDCFE">signup</span><span style="color:#FFD700">)</span><span style="color:#FFFFFF">;</span></div>
<div class="code" style="left:0;width:63px;text-align:right;top:200.98px;font-size:19.24px;line-height:28.5px;color:#FFFFFF">8</div>
<div class="code" style="left:103px;top:200.98px;font-size:19.24px;line-height:28.5px"><span style="color:#9CDCFE">router</span><span style="color:#FFFFFF">.</span><span style="color:#DCDCAA">post</span><span style="color:#FFD700">(</span><span style="color:#CE9178">&#x27;/login&#x27;</span><span style="color:#FFFFFF">, </span><span style="color:#9CDCFE">authController</span><span style="color:#FFFFFF">.</span><span style="color:#9CDCFE">login</span><span style="color:#FFD700">)</span><span style="color:#FFFFFF">;</span></div>
<div class="code" style="left:0;width:63px;text-align:right;top:229.48px;font-size:19.24px;line-height:28.5px;color:#FFFFFF">9</div>
<div class="code" style="left:103px;top:229.48px;font-size:19.24px;line-height:28.5px"><span style="color:#9CDCFE">router</span><span style="color:#FFFFFF">.</span><span style="color:#DCDCAA">get</span><span style="color:#FFD700">(</span><span style="color:#CE9178">&#x27;/logout&#x27;</span><span style="color:#FFFFFF">, </span><span style="color:#9CDCFE">authController</span><span style="color:#FFFFFF">.</span><span style="color:#9CDCFE">logout</span><span style="color:#FFD700">)</span><span style="color:#FFFFFF">;</span></div>
<div class="code" style="left:0;width:63px;text-align:right;top:257.98px;font-size:19.24px;line-height:28.5px;color:#FFFFFF">10</div>
<div class="code" style="left:0;width:63px;text-align:right;top:286.48px;font-size:19.24px;line-height:28.5px;color:#FFFFFF">11</div>
<div class="code" style="left:103px;top:286.48px;font-size:19.24px;line-height:28.5px"><span style="color:#9CDCFE">router</span><span style="color:#FFFFFF">.</span><span style="color:#DCDCAA">post</span><span style="color:#FFD700">(</span><span style="color:#CE9178">&#x27;/forgotPassword&#x27;</span><span style="color:#FFFFFF">, </span><span style="color:#9CDCFE">authController</span><span style="color:#FFFFFF">.</span><span style="color:#9CDCFE">forgotPassword</span><span style="color:#FFD700">)</span><span style="color:#FFFFFF">;</span></div>
<div class="code" style="left:0;width:63px;text-align:right;top:314.98px;font-size:19.24px;line-height:28.5px;color:#FFFFFF">12</div>
<div class="code" style="left:103px;top:314.98px;font-size:19.24px;line-height:28.5px"><span style="color:#9CDCFE">router</span><span style="color:#FFFFFF">.</span><span style="color:#DCDCAA">patch</span><span style="color:#FFD700">(</span><span style="color:#CE9178">&#x27;/resetPassword/:token&#x27;</span><span style="color:#FFFFFF">, </span><span style="color:#9CDCFE">authController</span><span style="color:#FFFFFF">.</span><span style="color:#9CDCFE">resetPassword</span><span style="color:#FFD700">)</span><span style="color:#FFFFFF">;</span></div>
<div class="code" style="left:0;width:63px;text-align:right;top:343.48px;font-size:19.24px;line-height:28.5px;color:#FFFFFF">13</div>
<div class="code" style="left:0;width:63px;text-align:right;top:371.98px;font-size:19.24px;line-height:28.5px;color:#FFFFFF">14</div>
<div class="code" style="left:103px;top:371.98px;font-size:19.24px;line-height:28.5px"><span style="color:#7CA668">// Protect all routes after this middleware</span></div>
<div class="code" style="left:0;width:63px;text-align:right;top:400.48px;font-size:19.24px;line-height:28.5px;color:#FFFFFF">15</div>
<div class="code" style="left:103px;top:400.48px;font-size:19.24px;line-height:28.5px"><span style="color:#9CDCFE">router</span><span style="color:#FFFFFF">.</span><span style="color:#DCDCAA">use</span><span style="color:#FFD700">(</span><span style="color:#9CDCFE">authController</span><span style="color:#FFFFFF">.</span><span style="color:#9CDCFE">protect</span><span style="color:#FFD700">)</span><span style="color:#FFFFFF">;</span></div>
<div class="code" style="left:0;width:63px;text-align:right;top:428.98px;font-size:19.24px;line-height:28.5px;color:#FFFFFF">16</div>
<div class="code" style="left:0;width:63px;text-align:right;top:457.48px;font-size:19.24px;line-height:28.5px;color:#FFFFFF">17</div>
<div class="code" style="left:103px;top:457.48px;font-size:19.24px;line-height:28.5px"><span style="color:#9CDCFE">router</span><span style="color:#FFFFFF">.</span><span style="color:#DCDCAA">patch</span><span style="color:#FFD700">(</span><span style="color:#CE9178">&#x27;/updateMyPassword&#x27;</span><span style="color:#FFFFFF">, </span><span style="color:#9CDCFE">authController</span><span style="color:#FFFFFF">.</span><span style="color:#9CDCFE">updatePassword</span><span style="color:#FFD700">)</span><span style="color:#FFFFFF">;</span></div>
<div class="code" style="left:0;width:63px;text-align:right;top:485.98px;font-size:19.24px;line-height:28.5px;color:#FFFFFF">18</div>
<div class="code" style="left:103px;top:485.98px;font-size:19.24px;line-height:28.5px"><span style="color:#9CDCFE">router</span><span style="color:#FFFFFF">.</span><span style="color:#DCDCAA">get</span><span style="color:#FFD700">(</span><span style="color:#CE9178">&#x27;/me&#x27;</span><span style="color:#FFFFFF">, </span><span style="color:#9CDCFE">userController</span><span style="color:#FFFFFF">.</span><span style="color:#9CDCFE">getMe</span><span style="color:#FFFFFF">, </span><span style="color:#9CDCFE">userController</span><span style="color:#FFFFFF">.</span><span style="color:#9CDCFE">getUser</span><span style="color:#FFD700">)</span><span style="color:#FFFFFF">;</span></div>
<div class="code" style="left:0;width:63px;text-align:right;top:514.48px;font-size:19.24px;line-height:28.5px;color:#FFFFFF">19</div>
<div class="code" style="left:103px;top:514.48px;font-size:19.24px;line-height:28.5px"><span style="color:#9CDCFE">router</span><span style="color:#FFFFFF">.</span><span style="color:#DCDCAA">patch</span><span style="color:#FFD700">(</span></div>
<div class="code" style="left:0;width:63px;text-align:right;top:542.98px;font-size:19.24px;line-height:28.5px;color:#FFFFFF">20</div>
<div class="code" style="left:103px;top:542.98px;font-size:19.24px;line-height:28.5px"><span style="color:#FFFFFF">  </span><span style="color:#CE9178">&#x27;/updateMe&#x27;</span><span style="color:#FFFFFF">,</span></div>
<div class="code" style="left:0;width:63px;text-align:right;top:571.48px;font-size:19.24px;line-height:28.5px;color:#FFFFFF">21</div>
<div class="code" style="left:103px;top:571.48px;font-size:19.24px;line-height:28.5px"><span style="color:#FFFFFF">  </span><span style="color:#9CDCFE">userController</span><span style="color:#FFFFFF">.</span><span style="color:#9CDCFE">uploadUserPhoto</span><span style="color:#FFFFFF">,</span></div>
<div class="code" style="left:0;width:63px;text-align:right;top:599.98px;font-size:19.24px;line-height:28.5px;color:#FFFFFF">22</div>
<div class="code" style="left:103px;top:599.98px;font-size:19.24px;line-height:28.5px"><span style="color:#FFFFFF">  </span><span style="color:#9CDCFE">userController</span><span style="color:#FFFFFF">.</span><span style="color:#9CDCFE">resizeUserPhoto</span><span style="color:#FFFFFF">,</span></div>
<div class="code" style="left:0;width:63px;text-align:right;top:628.48px;font-size:19.24px;line-height:28.5px;color:#FFFFFF">23</div>
<div class="code" style="left:103px;top:628.48px;font-size:19.24px;line-height:28.5px"><span style="color:#FFFFFF">  </span><span style="color:#9CDCFE">userController</span><span style="color:#FFFFFF">.</span><span style="color:#9CDCFE">updateMe</span></div>
<div class="code" style="left:0;width:63px;text-align:right;top:656.98px;font-size:19.24px;line-height:28.5px;color:#FFFFFF">24</div>
<div class="code" style="left:103px;top:656.98px;font-size:19.24px;line-height:28.5px"><span style="color:#FFD700">)</span><span style="color:#FFFFFF">;</span></div>
<div class="code" style="left:0;width:63px;text-align:right;top:685.48px;font-size:19.24px;line-height:28.5px;color:#FFFFFF">25</div>
<div class="code" style="left:103px;top:685.48px;font-size:19.24px;line-height:28.5px"><span style="color:#9CDCFE">router</span><span style="color:#FFFFFF">.</span><span style="color:#DCDCAA">delete</span><span style="color:#FFD700">(</span><span style="color:#CE9178">&#x27;/deleteMe&#x27;</span><span style="color:#FFFFFF">, </span><span style="color:#9CDCFE">userController</span><span style="color:#FFFFFF">.</span><span style="color:#9CDCFE">deleteMe</span><span style="color:#FFD700">)</span><span style="color:#FFFFFF">;</span></div>
<div class="code" style="left:0;width:63px;text-align:right;top:713.98px;font-size:19.24px;line-height:28.5px;color:#FFFFFF">26</div>
<div class="code" style="left:0;width:63px;text-align:right;top:742.48px;font-size:19.24px;line-height:28.5px;color:#FFFFFF">27</div>
<div class="code" style="left:103px;top:742.48px;font-size:19.24px;line-height:28.5px"><span style="color:#9CDCFE">router</span><span style="color:#FFFFFF">.</span><span style="color:#DCDCAA">use</span><span style="color:#FFD700">(</span><span style="color:#9CDCFE">authController</span><span style="color:#FFFFFF">.</span><span style="color:#DCDCAA">restrictTo</span><span style="color:#DA70D6">(</span><span style="color:#CE9178">&#x27;admin&#x27;</span><span style="color:#DA70D6">)</span><span style="color:#FFD700">)</span><span style="color:#FFFFFF">;</span></div>
<div class="code" style="left:0;width:63px;text-align:right;top:770.98px;font-size:19.24px;line-height:28.5px;color:#FFFFFF">28</div>
<div class="code" style="left:0;width:63px;text-align:right;top:799.48px;font-size:19.24px;line-height:28.5px;color:#FFFFFF">29</div>
<div class="code" style="left:103px;top:799.48px;font-size:19.24px;line-height:28.5px"><span style="color:#9CDCFE">router</span></div>
<div class="code" style="left:0;width:63px;text-align:right;top:827.98px;font-size:19.24px;line-height:28.5px;color:#FFFFFF">30</div>
<div class="code" style="left:103px;top:827.98px;font-size:19.24px;line-height:28.5px"><span style="color:#FFFFFF">  .</span><span style="color:#DCDCAA">route</span><span style="color:#FFD700">(</span><span style="color:#CE9178">&#x27;/&#x27;</span><span style="color:#FFD700">)</span></div>
<div class="code" style="left:0;width:63px;text-align:right;top:856.48px;font-size:19.24px;line-height:28.5px;color:#FFFFFF">31</div>
<div class="code" style="left:103px;top:856.48px;font-size:19.24px;line-height:28.5px"><span style="color:#FFFFFF">  .</span><span style="color:#DCDCAA">get</span><span style="color:#FFD700">(</span><span style="color:#9CDCFE">userController</span><span style="color:#FFFFFF">.</span><span style="color:#9CDCFE">getAllUsers</span><span style="color:#FFD700">)</span></div>
<div class="a" style="left:102.5px;top:541.5px;width:1px;height:114.0px;background:#fff"></div>
<div class="a" style="left:102.5px;top:826.5px;width:1px;height:57.0px;background:#fff"></div>
</div>
<svg width="1920" height="1031" style="position:absolute;left:0;top:0"><rect x="1788" y="138" width="111" height="861" fill="#000"/><g opacity="0.42"><rect x="1796" y="138.5" width="5" height="1.5" fill="#569CD6"/><rect x="1802" y="138.5" width="7" height="1.5" fill="#9CDCFE"/><rect x="1810" y="138.5" width="1" height="1.5" fill="#FFFFFF"/><rect x="1812" y="138.5" width="7" height="1.5" fill="#DCDCAA"/><rect x="1819" y="138.5" width="1" height="1.5" fill="#FFD700"/><rect x="1820" y="138.5" width="9" height="1.5" fill="#CE9178"/><rect x="1829" y="138.5" width="1" height="1.5" fill="#FFD700"/><rect x="1830" y="138.5" width="1" height="1.5" fill="#FFFFFF"/><rect x="1796" y="140.5" width="5" height="1.5" fill="#569CD6"/><rect x="1802" y="140.5" width="14" height="1.5" fill="#9CDCFE"/><rect x="1817" y="140.5" width="1" height="1.5" fill="#FFFFFF"/><rect x="1819" y="140.5" width="7" height="1.5" fill="#DCDCAA"/><rect x="1826" y="140.5" width="1" height="1.5" fill="#FFD700"/><rect x="1827" y="140.5" width="33" height="1.5" fill="#CE9178"/><rect x="1860" y="140.5" width="1" height="1.5" fill="#FFD700"/><rect x="1861" y="140.5" width="1" height="1.5" fill="#FFFFFF"/><rect x="1796" y="142.5" width="5" height="1.5" fill="#569CD6"/><rect x="1802" y="142.5" width="14" height="1.5" fill="#9CDCFE"/><rect x="1817" y="142.5" width="1" height="1.5" fill="#FFFFFF"/><rect x="1819" y="142.5" width="7" height="1.5" fill="#DCDCAA"/><rect x="1826" y="142.5" width="1" height="1.5" fill="#FFD700"/><rect x="1827" y="142.5" width="33" height="1.5" fill="#CE9178"/><rect x="1860" y="142.5" width="1" height="1.5" fill="#FFD700"/><rect x="1861" y="142.5" width="1" height="1.5" fill="#FFFFFF"/><rect x="1796" y="146.5" width="5" height="1.5" fill="#569CD6"/><rect x="1802" y="146.5" width="6" height="1.5" fill="#9CDCFE"/><rect x="1809" y="146.5" width="1" height="1.5" fill="#FFFFFF"/><rect x="1811" y="146.5" width="7" height="1.5" fill="#9CDCFE"/><rect x="1818" y="146.5" width="1" height="1.5" fill="#FFFFFF"/><rect x="1819" y="146.5" width="6" height="1.5" fill="#DCDCAA"/><rect x="1825" y="146.5" width="2" height="1.5" fill="#FFD700"/><rect x="1827" y="146.5" width="1" height="1.5" fill="#FFFFFF"/><rect x="1796" y="150.5" width="6" height="1.5" fill="#9CDCFE"/><rect x="1802" y="150.5" width="1" height="1.5" fill="#FFFFFF"/><rect x="1803" y="150.5" width="4" height="1.5" fill="#DCDCAA"/><rect x="1807" y="150.5" width="1" height="1.5" fill="#FFD700"/><rect x="1808" y="150.5" width="9" height="1.5" fill="#CE9178"/><rect x="1817" y="150.5" width="1" height="1.5" fill="#FFFFFF"/><rect x="1819" y="150.5" width="14" height="1.5" fill="#9CDCFE"/><rect x="1833" y="150.5" width="1" height="1.5" fill="#FFFFFF"/><rect x="1834" y="150.5" width="6" height="1.5" fill="#9CDCFE"/><rect x="1840" y="150.5" width="1" height="1.5" fill="#FFD700"/><rect x="1841" y="150.5" width="1" height="1.5" fill="#FFFFFF"/><rect x="1796" y="152.5" width="6" height="1.5" fill="#9CDCFE"/><rect x="1802" y="152.5" width="1" height="1.5" fill="#FFFFFF"/><rect x="1803" y="152.5" width="4" height="1.5" fill="#DCDCAA"/><rect x="1807" y="152.5" width="1" height="1.5" fill="#FFD700"/><rect x="1808" y="152.5" width="8" height="1.5" fill="#CE9178"/><rect x="1816" y="152.5" width="1" height="1.5" fill="#FFFFFF"/><rect x="1818" y="152.5" width="14" height="1.5" fill="#9CDCFE"/><rect x="1832" y="152.5" width="1" height="1.5" fill="#FFFFFF"/><rect x="1833" y="152.5" width="5" height="1.5" fill="#9CDCFE"/><rect x="1838" y="152.5" width="1" height="1.5" fill="#FFD700"/><rect x="1839" y="152.5" width="1" height="1.5" fill="#FFFFFF"/><rect x="1796" y="154.5" width="6" height="1.5" fill="#9CDCFE"/><rect x="1802" y="154.5" width="1" height="1.5" fill="#FFFFFF"/><rect x="1803" y="154.5" width="3" height="1.5" fill="#DCDCAA"/><rect x="1806" y="154.5" width="1" height="1.5" fill="#FFD700"/><rect x="1807" y="154.5" width="9" height="1.5" fill="#CE9178"/><rect x="1816" y="154.5" width="1" height="1.5" fill="#FFFFFF"/><rect x="1818" y="154.5" width="14" height="1.5" fill="#9CDCFE"/><rect x="1832" y="154.5" width="1" height="1.5" fill="#FFFFFF"/><rect x="1833" y="154.5" width="6" height="1.5" fill="#9CDCFE"/><rect x="1839" y="154.5" width="1" height="1.5" fill="#FFD700"/><rect x="1840" y="154.5" width="1" height="1.5" fill="#FFFFFF"/><rect x="1796" y="158.5" width="6" height="1.5" fill="#9CDCFE"/><rect x="1802" y="158.5" width="1" height="1.5" fill="#FFFFFF"/><rect x="1803" y="158.5" width="4" height="1.5" fill="#DCDCAA"/><rect x="1807" y="158.5" width="1" height="1.5" fill="#FFD700"/><rect x="1808" y="158.5" width="17" height="1.5" fill="#CE9178"/><rect x="1825" y="158.5" width="1" height="1.5" fill="#FFFFFF"/><rect x="1827" y="158.5" width="14" height="1.5" fill="#9CDCFE"/><rect x="1841" y="158.5" width="1" height="1.5" fill="#FFFFFF"/><rect x="1842" y="158.5" width="14" height="1.5" fill="#9CDCFE"/><rect x="1856" y="158.5" width="1" height="1.5" fill="#FFD700"/><rect x="1857" y="158.5" width="1" height="1.5" fill="#FFFFFF"/><rect x="1796" y="160.5" width="6" height="1.5" fill="#9CDCFE"/><rect x="1802" y="160.5" width="1" height="1.5" fill="#FFFFFF"/><rect x="1803" y="160.5" width="5" height="1.5" fill="#DCDCAA"/><rect x="1808" y="160.5" width="1" height="1.5" fill="#FFD700"/><rect x="1809" y="160.5" width="23" height="1.5" fill="#CE9178"/><rect x="1832" y="160.5" width="1" height="1.5" fill="#FFFFFF"/><rect x="1834" y="160.5" width="14" height="1.5" fill="#9CDCFE"/><rect x="1848" y="160.5" width="1" height="1.5" fill="#FFFFFF"/><rect x="1849" y="160.5" width="13" height="1.5" fill="#9CDCFE"/><rect x="1862" y="160.5" width="1" height="1.5" fill="#FFD700"/><rect x="1863" y="160.5" width="1" height="1.5" fill="#FFFFFF"/><rect x="1796" y="164.5" width="2" height="1.5" fill="#7CA668"/><rect x="1799" y="164.5" width="7" height="1.5" fill="#7CA668"/><rect x="1807" y="164.5" width="3" height="1.5" fill="#7CA668"/><rect x="1811" y="164.5" width="6" height="1.5" fill="#7CA668"/><rect x="1818" y="164.5" width="5" height="1.5" fill="#7CA668"/><rect x="1824" y="164.5" width="4" height="1.5" fill="#7CA668"/><rect x="1829" y="164.5" width="10" height="1.5" fill="#7CA668"/><rect x="1796" y="166.5" width="6" height="1.5" fill="#9CDCFE"/><rect x="1802" y="166.5" width="1" height="1.5" fill="#FFFFFF"/><rect x="1803" y="166.5" width="3" height="1.5" fill="#DCDCAA"/><rect x="1806" y="166.5" width="1" height="1.5" fill="#FFD700"/><rect x="1807" y="166.5" width="14" height="1.5" fill="#9CDCFE"/><rect x="1821" y="166.5" width="1" height="1.5" fill="#FFFFFF"/><rect x="1822" y="166.5" width="7" height="1.5" fill="#9CDCFE"/><rect x="1829" y="166.5" width="1" height="1.5" fill="#FFD700"/><rect x="1830" y="166.5" width="1" height="1.5" fill="#FFFFFF"/><rect x="1796" y="170.5" width="6" height="1.5" fill="#9CDCFE"/><rect x="1802" y="170.5" width="1" height="1.5" fill="#FFFFFF"/><rect x="1803" y="170.5" width="5" height="1.5" fill="#DCDCAA"/><rect x="1808" y="170.5" width="1" height="1.5" fill="#FFD700"/><rect x="1809" y="170.5" width="19" height="1.5" fill="#CE9178"/><rect x="1828" y="170.5" width="1" height="1.5" fill="#FFFFFF"/><rect x="1830" y="170.5" width="14" height="1.5" fill="#9CDCFE"/><rect x="1844" y="170.5" width="1" height="1.5" fill="#FFFFFF"/><rect x="1845" y="170.5" width="14" height="1.5" fill="#9CDCFE"/><rect x="1859" y="170.5" width="1" height="1.5" fill="#FFD700"/><rect x="1860" y="170.5" width="1" height="1.5" fill="#FFFFFF"/><rect x="1796" y="172.5" width="6" height="1.5" fill="#9CDCFE"/><rect x="1802" y="172.5" width="1" height="1.5" fill="#FFFFFF"/><rect x="1803" y="172.5" width="3" height="1.5" fill="#DCDCAA"/><rect x="1806" y="172.5" width="1" height="1.5" fill="#FFD700"/><rect x="1807" y="172.5" width="5" height="1.5" fill="#CE9178"/><rect x="1812" y="172.5" width="1" height="1.5" fill="#FFFFFF"/><rect x="1814" y="172.5" width="14" height="1.5" fill="#9CDCFE"/><rect x="1828" y="172.5" width="1" height="1.5" fill="#FFFFFF"/><rect x="1829" y="172.5" width="5" height="1.5" fill="#9CDCFE"/><rect x="1834" y="172.5" width="1" height="1.5" fill="#FFFFFF"/><rect x="1836" y="172.5" width="14" height="1.5" fill="#9CDCFE"/><rect x="1850" y="172.5" width="1" height="1.5" fill="#FFFFFF"/><rect x="1851" y="172.5" width="7" height="1.5" fill="#9CDCFE"/><rect x="1858" y="172.5" width="1" height="1.5" fill="#FFD700"/><rect x="1859" y="172.5" width="1" height="1.5" fill="#FFFFFF"/><rect x="1796" y="174.5" width="6" height="1.5" fill="#9CDCFE"/><rect x="1802" y="174.5" width="1" height="1.5" fill="#FFFFFF"/><rect x="1803" y="174.5" width="5" height="1.5" fill="#DCDCAA"/><rect x="1808" y="174.5" width="1" height="1.5" fill="#FFD700"/><rect x="1798" y="176.5" width="11" height="1.5" fill="#CE9178"/><rect x="1809" y="176.5" width="1" height="1.5" fill="#FFFFFF"/><rect x="1798" y="178.5" width="14" height="1.5" fill="#9CDCFE"/><rect x="1812" y="178.5" width="1" height="1.5" fill="#FFFFFF"/><rect x="1813" y="178.5" width="15" height="1.5" fill="#9CDCFE"/><rect x="1828" y="178.5" width="1" height="1.5" fill="#FFFFFF"/><rect x="1798" y="180.5" width="14" height="1.5" fill="#9CDCFE"/><rect x="1812" y="180.5" width="1" height="1.5" fill="#FFFFFF"/><rect x="1813" y="180.5" width="15" height="1.5" fill="#9CDCFE"/><rect x="1828" y="180.5" width="1" height="1.5" fill="#FFFFFF"/><rect x="1798" y="182.5" width="14" height="1.5" fill="#9CDCFE"/><rect x="1812" y="182.5" width="1" height="1.5" fill="#FFFFFF"/><rect x="1813" y="182.5" width="8" height="1.5" fill="#9CDCFE"/><rect x="1796" y="184.5" width="1" height="1.5" fill="#FFD700"/><rect x="1797" y="184.5" width="1" height="1.5" fill="#FFFFFF"/><rect x="1796" y="186.5" width="6" height="1.5" fill="#9CDCFE"/><rect x="1802" y="186.5" width="1" height="1.5" fill="#FFFFFF"/><rect x="1803" y="186.5" width="6" height="1.5" fill="#DCDCAA"/><rect x="1809" y="186.5" width="1" height="1.5" fill="#FFD700"/><rect x="1810" y="186.5" width="11" height="1.5" fill="#CE9178"/><rect x="1821" y="186.5" width="1" height="1.5" fill="#FFFFFF"/><rect x="1823" y="186.5" width="14" height="1.5" fill="#9CDCFE"/><rect x="1837" y="186.5" width="1" height="1.5" fill="#FFFFFF"/><rect x="1838" y="186.5" width="8" height="1.5" fill="#9CDCFE"/><rect x="1846" y="186.5" width="1" height="1.5" fill="#FFD700"/><rect x="1847" y="186.5" width="1" height="1.5" fill="#FFFFFF"/><rect x="1796" y="190.5" width="6" height="1.5" fill="#9CDCFE"/><rect x="1802" y="190.5" width="1" height="1.5" fill="#FFFFFF"/><rect x="1803" y="190.5" width="3" height="1.5" fill="#DCDCAA"/><rect x="1806" y="190.5" width="1" height="1.5" fill="#FFD700"/><rect x="1807" y="190.5" width="14" height="1.5" fill="#9CDCFE"/><rect x="1821" y="190.5" width="1" height="1.5" fill="#FFFFFF"/><rect x="1822" y="190.5" width="10" height="1.5" fill="#DCDCAA"/><rect x="1832" y="190.5" width="1" height="1.5" fill="#DA70D6"/><rect x="1833" y="190.5" width="7" height="1.5" fill="#CE9178"/><rect x="1840" y="190.5" width="1" height="1.5" fill="#DA70D6"/><rect x="1841" y="190.5" width="1" height="1.5" fill="#FFD700"/><rect x="1842" y="190.5" width="1" height="1.5" fill="#FFFFFF"/><rect x="1796" y="194.5" width="6" height="1.5" fill="#9CDCFE"/><rect x="1798" y="196.5" width="1" height="1.5" fill="#FFFFFF"/><rect x="1799" y="196.5" width="5" height="1.5" fill="#DCDCAA"/><rect x="1804" y="196.5" width="1" height="1.5" fill="#FFD700"/><rect x="1805" y="196.5" width="3" height="1.5" fill="#CE9178"/><rect x="1808" y="196.5" width="1" height="1.5" fill="#FFD700"/><rect x="1798" y="198.5" width="1" height="1.5" fill="#FFFFFF"/><rect x="1799" y="198.5" width="3" height="1.5" fill="#DCDCAA"/><rect x="1802" y="198.5" width="1" height="1.5" fill="#FFD700"/><rect x="1803" y="198.5" width="14" height="1.5" fill="#9CDCFE"/><rect x="1817" y="198.5" width="1" height="1.5" fill="#FFFFFF"/><rect x="1818" y="198.5" width="11" height="1.5" fill="#9CDCFE"/><rect x="1829" y="198.5" width="1" height="1.5" fill="#FFD700"/><rect x="1798" y="200.5" width="1" height="1.5" fill="#FFFFFF"/><rect x="1799" y="200.5" width="4" height="1.5" fill="#DCDCAA"/><rect x="1803" y="200.5" width="1" height="1.5" fill="#FFD700"/><rect x="1804" y="200.5" width="14" height="1.5" fill="#9CDCFE"/><rect x="1818" y="200.5" width="1" height="1.5" fill="#FFFFFF"/><rect x="1819" y="200.5" width="10" height="1.5" fill="#9CDCFE"/><rect x="1829" y="200.5" width="1" height="1.5" fill="#FFD700"/><rect x="1830" y="200.5" width="1" height="1.5" fill="#FFFFFF"/><rect x="1796" y="204.5" width="6" height="1.5" fill="#9CDCFE"/><rect x="1798" y="206.5" width="1" height="1.5" fill="#FFFFFF"/><rect x="1799" y="206.5" width="5" height="1.5" fill="#DCDCAA"/><rect x="1804" y="206.5" width="1" height="1.5" fill="#FFD700"/><rect x="1805" y="206.5" width="6" height="1.5" fill="#CE9178"/><rect x="1811" y="206.5" width="1" height="1.5" fill="#FFD700"/><rect x="1798" y="208.5" width="1" height="1.5" fill="#FFFFFF"/><rect x="1799" y="208.5" width="3" height="1.5" fill="#DCDCAA"/><rect x="1802" y="208.5" width="1" height="1.5" fill="#FFD700"/><rect x="1803" y="208.5" width="14" height="1.5" fill="#9CDCFE"/><rect x="1817" y="208.5" width="1" height="1.5" fill="#FFFFFF"/><rect x="1818" y="208.5" width="7" height="1.5" fill="#9CDCFE"/><rect x="1825" y="208.5" width="1" height="1.5" fill="#FFD700"/><rect x="1798" y="210.5" width="1" height="1.5" fill="#FFFFFF"/><rect x="1799" y="210.5" width="5" height="1.5" fill="#DCDCAA"/><rect x="1804" y="210.5" width="1" height="1.5" fill="#FFD700"/><rect x="1805" y="210.5" width="14" height="1.5" fill="#9CDCFE"/><rect x="1819" y="210.5" width="1" height="1.5" fill="#FFFFFF"/><rect x="1820" y="210.5" width="10" height="1.5" fill="#9CDCFE"/><rect x="1830" y="210.5" width="1" height="1.5" fill="#FFD700"/><rect x="1798" y="212.5" width="1" height="1.5" fill="#FFFFFF"/><rect x="1799" y="212.5" width="6" height="1.5" fill="#DCDCAA"/><rect x="1805" y="212.5" width="1" height="1.5" fill="#FFD700"/><rect x="1806" y="212.5" width="14" height="1.5" fill="#9CDCFE"/><rect x="1820" y="212.5" width="1" height="1.5" fill="#FFFFFF"/><rect x="1821" y="212.5" width="10" height="1.5" fill="#9CDCFE"/><rect x="1831" y="212.5" width="1" height="1.5" fill="#FFD700"/><rect x="1832" y="212.5" width="1" height="1.5" fill="#FFFFFF"/><rect x="1796" y="216.5" width="6" height="1.5" fill="#9CDCFE"/><rect x="1802" y="216.5" width="1" height="1.5" fill="#FFFFFF"/><rect x="1803" y="216.5" width="7" height="1.5" fill="#9CDCFE"/><rect x="1811" y="216.5" width="1" height="1.5" fill="#FFFFFF"/><rect x="1813" y="216.5" width="6" height="1.5" fill="#9CDCFE"/><rect x="1819" y="216.5" width="1" height="1.5" fill="#FFFFFF"/></g><rect x="1899" y="138" width="1" height="861" fill="#232323"/><rect x="1900" y="138" width="20" height="3" fill="#bdbdbd"/></svg>
<svg width="1920" height="1031" style="position:absolute;left:0;top:0">
<g opacity="0.33" fill="#fff">
<path d="M845 978.4L851.6 982.1V994.5Q851.6 1001.9 859 1001.9H886.5Q893.5 1001.9 893.5 995V978.6H899.7V996.5Q899.7 1008.9 887.5 1008.9H858Q845 1008.9 845 996Z"/>
<path d="M866 964.5L872.5 971L866 977.5L859.5 971Z"/>
<path d="M881.3 963.5L887.8 970L881.3 976.5L874.8 970Z"/>
<path d="M903.7 967.6L910.6 964V995Q910.6 1001.9 918 1001.9H1002.8V1008.9H917Q903.7 1008.9 903.7 997Z"/>
<path d="M934 981.2L941 978.8V1002H934Z"/>
<path d="M953.2 981.2L960.8 978.8V1002H953.2Z"/>
<path d="M972.3 981.2L980.1 978.7V1002H972.3Z"/>
<path d="M989.3 963.8H1002.8V971.2H997.4V978.5Q993.5 980.5 989.3 984.1Z"/>
<path d="M1005.2 963.8H1020.1V971.2H1005.2Z"/>
<path d="M990.3 993.6V988.2Q993 978.5 1002.8 977.3V985.3Q998.5 986.5 997.4 993.6Z"/>
<path d="M1005.2 977.2Q1021.8 977.5 1021.8 993Q1021.8 1006 1008 1008.9H1005.2V1001.3Q1014 1000.5 1014 993Q1014 985.5 1005.2 985.2Z"/>
<path d="M1017 1008.9L1021 1001.9H1066.5V999Q1066.5 985.5 1052.5 985Q1044.5 985 1040.5 990.5L1036 984.8Q1042 978 1052.5 978Q1074 978 1074 999.5V1008.9Z"/>
<path d="M1052.2 963.4L1058.4 969.6L1052.2 975.8L1046 969.6Z"/>
</g></svg>
</body></html>
